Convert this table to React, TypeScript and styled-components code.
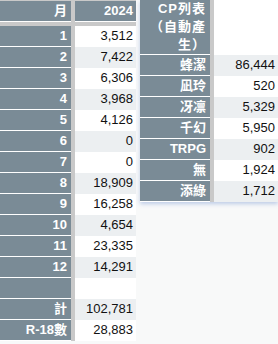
import { Fragment } from 'react';
import styled, { createGlobalStyle } from 'styled-components';

const GlobalStyle = createGlobalStyle`
  html, body {
    margin: 0;
    padding: 0;
    background: #f8f9f9;
    font-family: "Liberation Sans", Arial, "Noto Sans CJK TC", sans-serif;
  }
`;

const Page = styled.div`
  display: flex;
  align-items: flex-start;
  gap: 4px;
`;

const Sheet = styled.div<{ $shadow?: boolean }>`
  display: grid;
  grid-template-columns: 71px 4px 61px;
  background: #ffffff;
  ${(p) => p.$shadow && 'box-shadow: 0 2px 4px rgba(80, 120, 200, 0.35);'}
`;

const TopLine = styled.div`
  grid-column: 1 / -1;
  height: 1px;
  background: #c9c9c9;
`;

const HeadCell = styled.div<{ $tall?: boolean }>`
  background: #7a8b96;
  color: #ffffff;
  font-weight: bold;
  font-size: 13px;
  text-align: right;
  padding: 0 4px 0 2px;
  height: ${(p) => (p.$tall ? '54px' : '20px')};
  line-height: ${(p) => (p.$tall ? '18px' : '20px')};
  border-bottom: 1px solid #ffffff;
  white-space: ${(p) => (p.$tall ? 'normal' : 'nowrap')};
  letter-spacing: ${(p) => (p.$tall ? '1px' : '0')};
`;

const VBar = styled.div`
  background: #c9c9c9;
`;

const HBar = styled.div`
  grid-column: 1 / -1;
  height: 4px;
  background: #c9c9c9;
`;

const DataCell = styled.div<{ $alt?: boolean; $head?: boolean; $tall?: boolean }>`
  background: ${(p) => (p.$head ? '#7a8b96' : p.$alt ? '#eceff1' : '#ffffff')};
  color: ${(p) => (p.$head ? '#ffffff' : '#111111')};
  font-weight: ${(p) => (p.$head ? 'bold' : 'normal')};
  font-size: 13px;
  text-align: right;
  padding-right: 3px;
  height: ${(p) => (p.$tall ? '54px' : '20px')};
  line-height: 20px;
  border-bottom: 1px solid ${(p) => (p.$head ? '#ffffff' : 'transparent')};
`;

const RightSheet = styled(Sheet)`
  grid-template-columns: 70px 4px 64px;
`;

const months: [string, string][] = [
  ['1', '3,512'],
  ['2', '7,422'],
  ['3', '6,306'],
  ['4', '3,968'],
  ['5', '4,126'],
  ['6', '0'],
  ['7', '0'],
  ['8', '18,909'],
  ['9', '16,258'],
  ['10', '4,654'],
  ['11', '23,335'],
  ['12', '14,291'],
  ['', ''],
  ['計', '102,781'],
  ['R-18數', '28,883'],
];

const pairs: [string, string][] = [
  ['蜂潔', '86,444'],
  ['凪玲', '520'],
  ['冴凛', '5,329'],
  ['千幻', '5,950'],
  ['TRPG', '902'],
  ['無', '1,924'],
  ['添綠', '1,712'],
];

export default function App() {
  return (
    <>
      <GlobalStyle />
      <Page>
        <Sheet>
          <TopLine />
          <HeadCell>月</HeadCell>
          <VBar />
          <DataCell $head>2024</DataCell>
          <HBar />
          {months.map(([m, v], i) => (
            <Fragment key={i}>
              <HeadCell>{m}</HeadCell>
              <VBar />
              <DataCell $alt={i % 2 === 1}>{v}</DataCell>
            </Fragment>
          ))}
        </Sheet>
        <RightSheet $shadow>
          <HeadCell $tall>CP列表（自動產生）</HeadCell>
          <VBar />
          <DataCell $tall />
          {pairs.map(([name, v], i) => (
            <Fragment key={i}>
              <HeadCell>{name}</HeadCell>
              <VBar />
              <DataCell $alt={i % 2 === 0}>{v}</DataCell>
            </Fragment>
          ))}
        </RightSheet>
      </Page>
    </>
  );
}
